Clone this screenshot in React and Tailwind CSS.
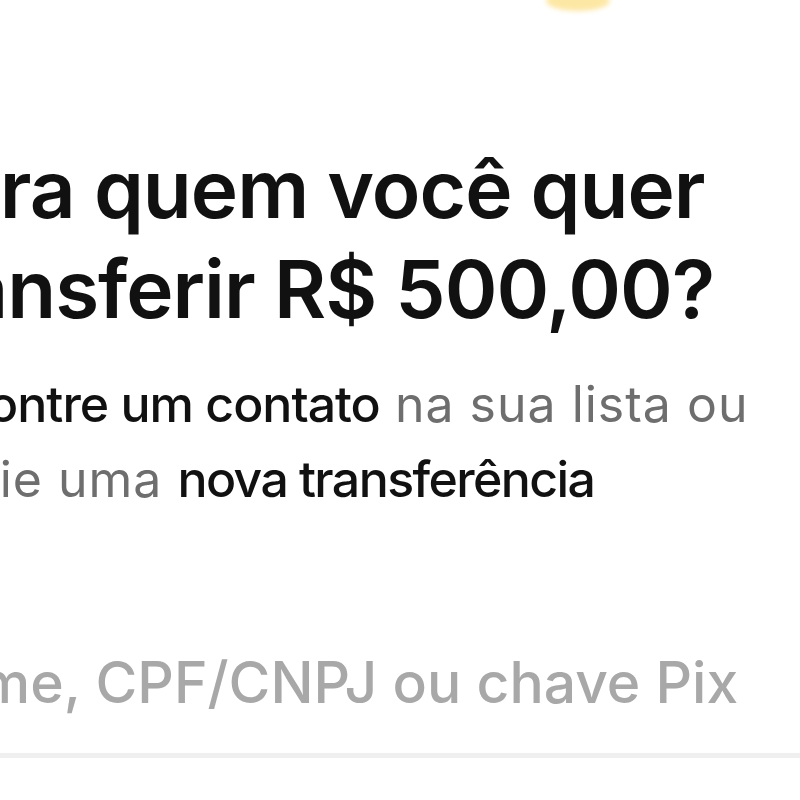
const Blob = () => (
  <svg className="block" width="800" height="16" viewBox="0 0 800 16">
    <defs>
      <filter id="soft" x="-50%" y="-50%" width="200%" height="200%">
        <feGaussianBlur stdDeviation="2.5" />
      </filter>
    </defs>
    <ellipse cx="578" cy="1" rx="32" ry="10" fill="#fde7a4" filter="url(#soft)" />
  </svg>
);

export default function App() {
  return (
    <div className="w-[800px] h-[800px] overflow-hidden bg-white font-['Inter',sans-serif]">
      <Blob />
      <div className="ml-[-95px] w-[1000px]">
        {/* Title */}
        <h1 className="mt-[123px] text-[80px] leading-[100px] font-semibold tracking-[-1px] text-[#111111]">
          <span className="block">Para quem você quer</span>
          <span className="block">transferir R$ 500,00?</span>
        </h1>
      </div>

      {/* Subtitle */}
      <p className="mt-[28px] w-[1000px] text-[50px] leading-[75px] text-[#6e6e6e] tracking-[1px]">
        <span className="block ml-[-98px]">
          <span className="font-medium tracking-[-1px] text-[#111111]">Encontre um contato</span> na sua lista ou
        </span>
        <span className="block ml-[-88px]">
          Inicie uma <span className="font-medium tracking-[-1.6px] text-[#111111]">nova transferência</span>
        </span>
      </p>

      {/* Search field */}
      <div className="ml-[-98px] w-[1000px]">
        <div className="mt-[131px] text-[57px] leading-[70px] font-medium text-[#a8a8a8]">Nome, CPF/CNPJ ou chave Pix</div>
      </div>
      <div className="mt-[35px] h-[5px] bg-[#efefef]" />
    </div>
  );
}
